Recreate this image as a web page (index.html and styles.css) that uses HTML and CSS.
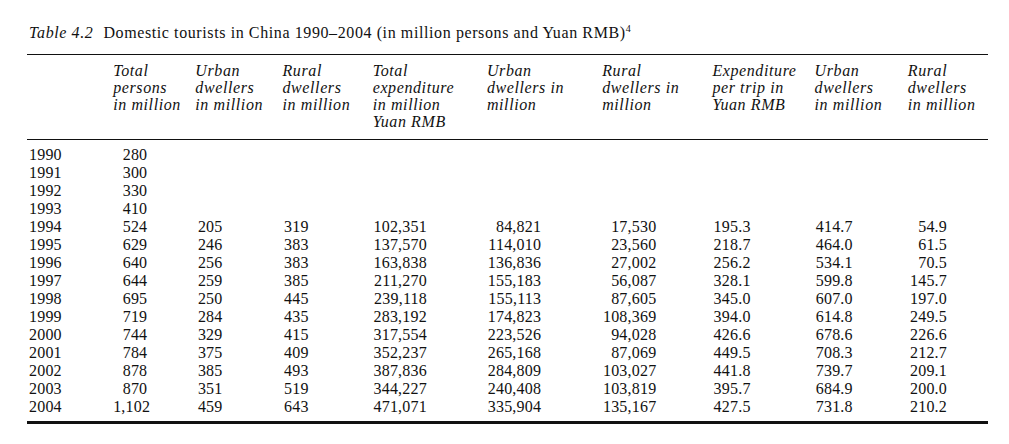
FILE: index.html
```html
<!DOCTYPE html>
<html lang="en">
<head>
    <meta charset="UTF-8">
    <title>Table 4.2 - Domestic tourists in China</title>
    <link rel="stylesheet" href="styles.css">
</head>
<body>

    <div class="sheet">
        <p class="title"><em>Table 4.2</em><span class="gap"></span>Domestic tourists in China 1990&ndash;2004 (in million persons and Yuan RMB)<sup>4</sup></p>

        <table class="data">
            <colgroup>
                <col class="c-year">
                <col class="c1"><col class="c2"><col class="c3"><col class="c4">
                <col class="c5"><col class="c6"><col class="c7"><col class="c8"><col class="c9">
            </colgroup>
            <thead>
                <tr>
                    <th></th>
                    <th>Total<br>persons<br>in million</th>
                    <th>Urban<br>dwellers<br>in million</th>
                    <th>Rural<br>dwellers<br>in million</th>
                    <th>Total<br>expenditure<br>in million<br>Yuan RMB</th>
                    <th>Urban<br>dwellers in<br>million</th>
                    <th>Rural<br>dwellers in<br>million</th>
                    <th>Expenditure<br>per trip in<br>Yuan RMB</th>
                    <th>Urban<br>dwellers<br>in million</th>
                    <th>Rural<br>dwellers<br>in million</th>
                </tr>
            </thead>
            <tbody id="rows">
                <tr><td>1990</td><td>280</td><td></td><td></td><td></td><td></td><td></td><td></td><td></td><td></td></tr>
                <tr><td>1991</td><td>300</td><td></td><td></td><td></td><td></td><td></td><td></td><td></td><td></td></tr>
                <tr><td>1992</td><td>330</td><td></td><td></td><td></td><td></td><td></td><td></td><td></td><td></td></tr>
                <tr><td>1993</td><td>410</td><td></td><td></td><td></td><td></td><td></td><td></td><td></td><td></td></tr>
                <tr><td>1994</td><td>524</td><td>205</td><td>319</td><td>102,351</td><td>84,821</td><td>17,530</td><td>195.3</td><td>414.7</td><td>54.9</td></tr>
                <tr><td>1995</td><td>629</td><td>246</td><td>383</td><td>137,570</td><td>114,010</td><td>23,560</td><td>218.7</td><td>464.0</td><td>61.5</td></tr>
                <tr><td>1996</td><td>640</td><td>256</td><td>383</td><td>163,838</td><td>136,836</td><td>27,002</td><td>256.2</td><td>534.1</td><td>70.5</td></tr>
                <tr><td>1997</td><td>644</td><td>259</td><td>385</td><td>211,270</td><td>155,183</td><td>56,087</td><td>328.1</td><td>599.8</td><td>145.7</td></tr>
                <tr><td>1998</td><td>695</td><td>250</td><td>445</td><td>239,118</td><td>155,113</td><td>87,605</td><td>345.0</td><td>607.0</td><td>197.0</td></tr>
                <tr><td>1999</td><td>719</td><td>284</td><td>435</td><td>283,192</td><td>174,823</td><td>108,369</td><td>394.0</td><td>614.8</td><td>249.5</td></tr>
                <tr><td>2000</td><td>744</td><td>329</td><td>415</td><td>317,554</td><td>223,526</td><td>94,028</td><td>426.6</td><td>678.6</td><td>226.6</td></tr>
                <tr><td>2001</td><td>784</td><td>375</td><td>409</td><td>352,237</td><td>265,168</td><td>87,069</td><td>449.5</td><td>708.3</td><td>212.7</td></tr>
                <tr><td>2002</td><td>878</td><td>385</td><td>493</td><td>387,836</td><td>284,809</td><td>103,027</td><td>441.8</td><td>739.7</td><td>209.1</td></tr>
                <tr><td>2003</td><td>870</td><td>351</td><td>519</td><td>344,227</td><td>240,408</td><td>103,819</td><td>395.7</td><td>684.9</td><td>200.0</td></tr>
                <tr><td>2004</td><td>1,102</td><td>459</td><td>643</td><td>471,071</td><td>335,904</td><td>135,167</td><td>427.5</td><td>731.8</td><td>210.2</td></tr>
            </tbody>
        </table>
    </div>

</body>
</html>
```

FILE: styles.css
```css
/* General */
body {
    margin: 0;
    padding: 0;
    background: #fff;
    color: #111;
    font-family: "Liberation Serif", "Times New Roman", serif;
}

.sheet {
    width: 961px;
    padding: 24px 0 0 27px;
}

/* Title */
.title {
    margin: 0 0 12px 2px;
    font-size: 16px;
    line-height: 18px;
    letter-spacing: 0.6px;
}

.title .gap {
    display: inline-block;
    width: 10px;
}

.title sup {
    font-size: 10px;
    line-height: 0;
    letter-spacing: 0;
}

/* Table */
.data {
    width: 961px;
    border-collapse: collapse;
    table-layout: fixed;
    font-size: 16px;
}

.data thead {
    border-top: 1px solid #111;
    border-bottom: 1px solid #111;
}

.data tbody {
    border-bottom: 3px solid #111;
}

.c-year { width: 86px; }
.c1 { width: 82px; }
.c2 { width: 87px; }
.c3 { width: 90px; }
.c4 { width: 114px; }
.c5 { width: 115px; }
.c6 { width: 110px; }
.c7 { width: 102px; }
.c8 { width: 93px; }
.c9 { width: 80px; }

.data th {
    padding: 7px 0 9px;
    text-align: left;
    vertical-align: top;
    font-weight: normal;
    font-style: italic;
    line-height: 17px;
    letter-spacing: 0.6px;
    white-space: nowrap;
}

.data td {
    padding: 0;
    line-height: 18px;
    text-align: right;
    white-space: nowrap;
    letter-spacing: 0.2px;
}

.data tbody tr:first-child td { padding-top: 6px; }
.data tbody tr:last-child td { padding-bottom: 5px; }

/* number positions inside each column */
.data td:nth-child(1) { text-align: left; padding-left: 2px; }
.data td:nth-child(2) { padding-right: 48px; }
.data td:nth-child(3) { padding-right: 60px; }
.data td:nth-child(4) { padding-right: 64px; }
.data td:nth-child(5) { padding-right: 60px; }
.data td:nth-child(6) { padding-right: 61px; }
.data td:nth-child(7) { padding-right: 56px; }
.data td:nth-child(8) { padding-right: 64px; }
.data td:nth-child(9) { padding-right: 55px; }
.data td:nth-child(10) { padding-right: 41px; }
```
